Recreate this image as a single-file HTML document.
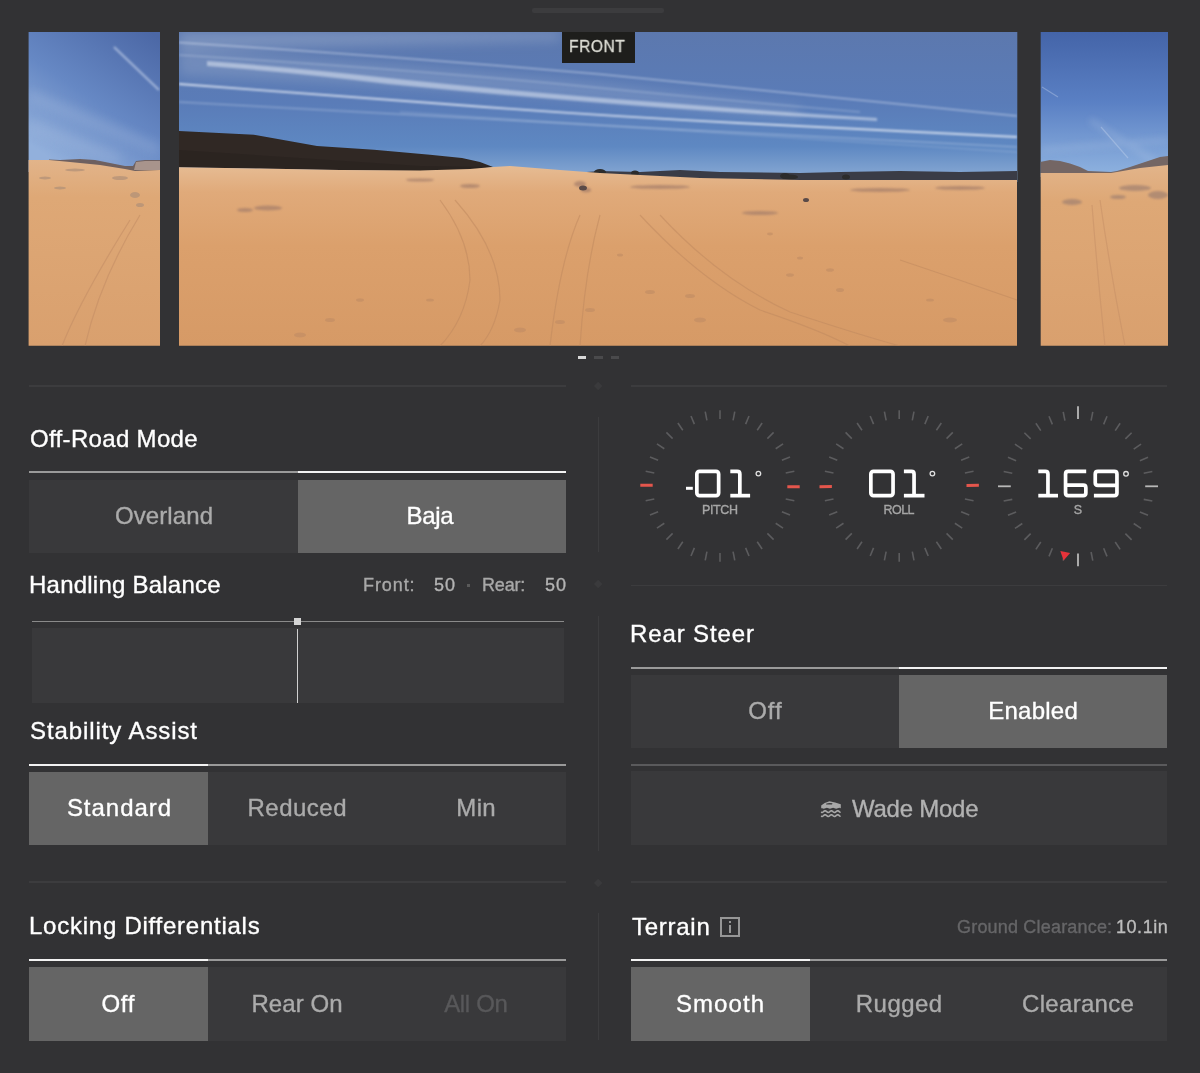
<!DOCTYPE html>
<html><head><meta charset="utf-8"><style>
html,body{margin:0;padding:0;}
body{width:1200px;height:1073px;background:#323234;position:relative;overflow:hidden;font-family:"Liberation Sans",sans-serif;}
.t{position:absolute;white-space:nowrap;-webkit-text-stroke:0.35px currentColor;will-change:transform;}
.r{position:absolute;box-sizing:border-box;}
svg{position:absolute;}
</style></head><body>
<div class="r" style="left:531.5px;top:8px;width:132px;height:4.5px;background:#3c3c3e;border-radius:2px;"></div>
<svg style="left:0;top:0" width="1200" height="1073" viewBox="0 0 1200 1073"><defs>
<linearGradient id="skyC" x1="0" y1="32" x2="0" y2="175" gradientUnits="userSpaceOnUse">
 <stop offset="0" stop-color="#5c78ae"/>
 <stop offset="0.5" stop-color="#5a7cb8"/>
 <stop offset="0.8" stop-color="#5e88c2"/>
 <stop offset="1" stop-color="#84a6d2"/>
</linearGradient>
<linearGradient id="sandC" x1="0" y1="165" x2="0" y2="346" gradientUnits="userSpaceOnUse">
 <stop offset="0" stop-color="#e6bc94"/>
 <stop offset="0.15" stop-color="#e0aa7a"/>
 <stop offset="0.45" stop-color="#dba06c"/>
 <stop offset="1" stop-color="#d69a66"/>
</linearGradient>
<linearGradient id="skyL" x1="150" y1="32" x2="60" y2="165" gradientUnits="userSpaceOnUse">
 <stop offset="0" stop-color="#4c68a6"/>
 <stop offset="0.55" stop-color="#6688c4"/>
 <stop offset="1" stop-color="#92b0dc"/>
</linearGradient>
<linearGradient id="sandL" x1="0" y1="160" x2="0" y2="346" gradientUnits="userSpaceOnUse">
 <stop offset="0" stop-color="#e2b48a"/>
 <stop offset="0.2" stop-color="#dea876"/>
 <stop offset="1" stop-color="#d9a06e"/>
</linearGradient>
<linearGradient id="skyR" x1="0" y1="32" x2="0" y2="172" gradientUnits="userSpaceOnUse">
 <stop offset="0" stop-color="#4464a8"/>
 <stop offset="0.5" stop-color="#5a80c4"/>
 <stop offset="1" stop-color="#8cb0de"/>
</linearGradient>
<linearGradient id="sandR" x1="0" y1="165" x2="0" y2="346" gradientUnits="userSpaceOnUse">
 <stop offset="0" stop-color="#e2b48a"/>
 <stop offset="0.2" stop-color="#dea876"/>
 <stop offset="1" stop-color="#d9a06e"/>
</linearGradient>
<filter id="b06" x="-20%" y="-100%" width="140%" height="300%"><feGaussianBlur stdDeviation="0.6"/></filter>
<filter id="b1" x="-20%" y="-100%" width="140%" height="300%"><feGaussianBlur stdDeviation="1.2"/></filter>
<filter id="b3" x="-20%" y="-100%" width="140%" height="300%"><feGaussianBlur stdDeviation="3.5"/></filter>
<filter id="b6" x="-20%" y="-100%" width="140%" height="300%"><feGaussianBlur stdDeviation="6"/></filter>
<clipPath id="cC"><rect x="179" y="32" width="838.3" height="313.7"/></clipPath>
<clipPath id="cL"><rect x="28.6" y="32" width="131.4" height="313.7"/></clipPath>
<clipPath id="cR"><rect x="1040.7" y="32" width="127.3" height="313.7"/></clipPath>
</defs><g clip-path="url(#cC)"><rect x="179" y="32" width="839" height="150" fill="url(#skyC)"/><g filter="url(#b6)" fill="#9aaccc" opacity="0.5"><path d="M179 32 H560 V40 Q400 44 179 50 Z"/><path d="M179 50 Q400 64 600 84 Q700 96 800 108 L800 118 Q700 110 600 100 Q400 84 179 76 Z" opacity="0.7"/></g><g filter="url(#b1)" fill="none" stroke="#e4eaf6"><path d="M179 42.5 Q390 56 598 74 Q800 94 1017 116" stroke-width="1" opacity="0.7"/><path d="M179 84 Q320 94 458 105 Q600 116 738 123 Q880 130 1017 137" stroke-width="1.8" opacity="0.85"/><path d="M179 102 Q600 126 1017 147" stroke-width="0.9" opacity="0.5"/><path d="M179 55 Q390 68 560 84 Q700 98 860 112" stroke-width="0.8" opacity="0.5"/><path d="M400 112 Q700 132 1017 152" stroke-width="0.7" opacity="0.4"/></g><g filter="url(#b1)" fill="#dfe6f3" opacity="0.55"><path d="M207 61 Q300 68 388 78 Q520 92 668 103 Q780 112 877 118 L877 121 Q780 116 668 108 Q520 97 388 84 Q300 73 207 66 Z"/></g><path d="M560 174 L600 171 L640 172 L680 170 L720 172 L800 173 L840 172 L900 171 L960 172 L1017 171 L1017 184 L560 182 Z" fill="#3a3c46"/><g fill="#2c2c2c"><ellipse cx="600" cy="172" rx="6" ry="3"/><ellipse cx="635" cy="173" rx="4" ry="2.5"/><ellipse cx="785" cy="176" rx="5" ry="3"/><ellipse cx="846" cy="177" rx="4" ry="2.5"/><ellipse cx="790" cy="177" rx="8" ry="2.5"/></g><path d="M179 131 L254 134.8 L317 146 L374 149.8 L430 154.8 L462 158 L480 162 L493 167 L470 170 L420 171 L340 170 L260 168.5 L179 167.3 Z" fill="#302824"/><path d="M179 150 L300 158 L420 166 L493 167 L420 171 L340 170 L179 167.3 Z" fill="#2a221f" opacity="0.7"/><path d="M179 167.3 L260 168.5 L340 170 L420 170.5 L470 169 L493 167 L510 166 L560 170 L600 173 L700 178 L800 180 L1017 180 L1017 346 L179 346 Z" fill="url(#sandC)"/><g filter="url(#b1)" fill="#a8806a" opacity="0.75"><ellipse cx="268" cy="208" rx="14" ry="2.5"/><ellipse cx="245" cy="210" rx="8" ry="2"/><ellipse cx="580" cy="184" rx="6" ry="3"/><ellipse cx="586" cy="190" rx="5" ry="2.5"/><ellipse cx="660" cy="187" rx="30" ry="2"/><ellipse cx="760" cy="213" rx="18" ry="2"/><ellipse cx="880" cy="190" rx="30" ry="2"/><ellipse cx="960" cy="188" rx="25" ry="2"/><ellipse cx="470" cy="186" rx="10" ry="2"/><ellipse cx="420" cy="180" rx="14" ry="1.6"/></g><g fill="#5a4a48"><ellipse cx="806" cy="200" rx="3" ry="2"/><ellipse cx="583" cy="188" rx="4" ry="2.5"/></g><g fill="none" stroke="#c08a60" stroke-width="1.2" opacity="0.55" filter="url(#b06)"><path d="M440 200 Q470 240 470 280 Q465 320 440 346"/><path d="M455 200 Q500 250 500 300 Q495 330 480 346"/><path d="M580 215 Q560 260 550 346"/><path d="M600 215 Q585 270 580 346"/><path d="M640 215 Q700 280 760 310 Q820 330 850 346"/><path d="M660 215 Q720 280 790 312 Q860 335 900 346"/><path d="M900 260 Q960 280 1017 300"/></g><g fill="#c08c64" opacity="0.6"><ellipse cx="520" cy="330" rx="6" ry="2.5"/><ellipse cx="560" cy="322" rx="5" ry="2"/><ellipse cx="590" cy="310" rx="5" ry="2"/><ellipse cx="650" cy="292" rx="5" ry="2"/><ellipse cx="690" cy="296" rx="5" ry="2"/><ellipse cx="700" cy="320" rx="6" ry="2.5"/><ellipse cx="790" cy="275" rx="4" ry="1.8"/><ellipse cx="830" cy="270" rx="4" ry="1.8"/><ellipse cx="800" cy="258" rx="3" ry="1.5"/><ellipse cx="840" cy="290" rx="4" ry="2"/><ellipse cx="950" cy="320" rx="7" ry="2.5"/><ellipse cx="930" cy="300" rx="4" ry="1.6"/><ellipse cx="300" cy="335" rx="6" ry="2.5"/><ellipse cx="330" cy="320" rx="5" ry="2"/><ellipse cx="360" cy="300" rx="4" ry="1.8"/><ellipse cx="430" cy="300" rx="4" ry="1.6"/><ellipse cx="620" cy="255" rx="3" ry="1.5"/><ellipse cx="770" cy="234" rx="3" ry="1.4"/></g></g><g clip-path="url(#cL)"><rect x="28" y="32" width="133" height="140" fill="url(#skyL)"/><g filter="url(#b6)" fill="none" stroke="#b4c6e4" opacity="0.35"><path d="M28 95 L160 150" stroke-width="8"/><path d="M28 125 L120 160" stroke-width="8"/></g><g filter="url(#b1)" stroke="#d0dcf0" fill="none" opacity="0.6"><path d="M114 47 L159 90" stroke-width="2.2"/></g><path d="M49 159.5 L60 160 L80 159 L95 160 L110 163 L125 166 L133 166 L136 161 L145 160 L160 160 L160 172 L49 172 Z" fill="#6e6060"/><path d="M136 162 L145 161 L160 161 L160 170 L134 170 Z" fill="#a8948c"/><path d="M28 160 L49 160 L70 162 L100 165 L125 169 L135 171 L160 170 L160 346 L28 346 Z" fill="url(#sandL)"/><g filter="url(#b06)" fill="#b09078" opacity="0.7"><ellipse cx="45" cy="178" rx="6" ry="1.5"/><ellipse cx="75" cy="170" rx="10" ry="1.5"/><ellipse cx="135" cy="195" rx="5" ry="3"/><ellipse cx="140" cy="205" rx="4" ry="2"/><ellipse cx="120" cy="178" rx="8" ry="2"/><ellipse cx="60" cy="188" rx="6" ry="1.5"/></g><g fill="none" stroke="#c48e66" stroke-width="1.2" opacity="0.6" filter="url(#b06)"><path d="M140 215 Q100 280 85 346"/><path d="M130 220 Q80 300 62 346"/></g></g><g clip-path="url(#cR)"><rect x="1040" y="32" width="128" height="145" fill="url(#skyR)"/><g filter="url(#b3)" fill="none" stroke="#b8cae6" opacity="0.3"><path d="M1090 120 L1168 170" stroke-width="5"/><path d="M1041 150 L1168 140" stroke-width="4"/></g><g filter="url(#b06)" stroke="#d0dcf0" fill="none" opacity="0.35"><path d="M1042 87 L1058 97" stroke-width="1.2"/><path d="M1101 127 L1128 158" stroke-width="1.2"/></g><path d="M1040 162 L1050 160 L1060 161 L1070 163.5 L1080 167 L1088 171 L1111 172 L1117 171 L1130 167 L1145 162 L1160 157 L1168 156 L1168 180 L1040 180 Z" fill="#746664"/><path d="M1040 173 L1090 173 L1111 173 L1117 172 L1140 168 L1168 165 L1168 346 L1040 346 Z" fill="url(#sandR)"/><g filter="url(#b1)" fill="#a08070" opacity="0.7"><ellipse cx="1072" cy="202" rx="10" ry="3"/><ellipse cx="1135" cy="188" rx="16" ry="3"/><ellipse cx="1158" cy="195" rx="10" ry="4"/><ellipse cx="1118" cy="197" rx="8" ry="2"/></g><g fill="none" stroke="#c48e66" stroke-width="1.2" opacity="0.5" filter="url(#b06)"><path d="M1100 200 Q1110 270 1125 346"/><path d="M1092 205 Q1098 280 1105 346"/></g></g></svg>
<div class="r" style="left:562px;top:32px;width:73px;height:31px;background:#1e1e1c;"></div>
<div class="t" style="left:569.3px;top:37.46px;font-size:17px;line-height:20px;color:#dcdcd4;letter-spacing:0.5px;transform:scaleX(0.92);transform-origin:left;">FRONT</div>
<div class="r" style="left:578px;top:356px;width:8px;height:3px;background:#d8d8d8;"></div>
<div class="r" style="left:594px;top:356px;width:8.5px;height:3px;background:#4a4a4c;"></div>
<div class="r" style="left:610.5px;top:356px;width:8.5px;height:3px;background:#4a4a4c;"></div>
<div class="r" style="left:29px;top:385px;width:537px;height:2px;background:#3c3c3e;"></div>
<div class="r" style="left:631px;top:385px;width:536px;height:2px;background:#3c3c3e;"></div>
<div class="r" style="left:631px;top:584.5px;width:536px;height:1.6px;background:#3c3c3e;"></div>
<div class="r" style="left:29px;top:881px;width:537px;height:1.8px;background:#3c3c3e;"></div>
<div class="r" style="left:631px;top:881px;width:536px;height:1.8px;background:#3c3c3e;"></div>
<div class="r" style="left:595.3px;top:382.8px;width:6.4px;height:6.4px;background:#3a3a3c;transform:rotate(45deg);"></div>
<div class="r" style="left:595.3px;top:581.3px;width:6.4px;height:6.4px;background:#3a3a3c;transform:rotate(45deg);"></div>
<div class="r" style="left:595.3px;top:879.5px;width:6.4px;height:6.4px;background:#3a3a3c;transform:rotate(45deg);"></div>
<div class="r" style="left:597.5px;top:416.5px;width:1.5px;height:135.5px;background:#3c3c3e;"></div>
<div class="r" style="left:597.5px;top:616px;width:1.5px;height:235px;background:#3c3c3e;"></div>
<div class="r" style="left:597.5px;top:912.5px;width:1.5px;height:127.5px;background:#3c3c3e;"></div>
<div class="t" style="left:29.6px;top:424.08px;font-size:24px;line-height:29px;color:#fff;letter-spacing:0.33px;">Off-Road Mode</div>
<div class="r" style="left:29px;top:471px;width:537px;height:2px;background:#9a9a9a;"></div>
<div class="r" style="left:297.5px;top:471px;width:268.5px;height:2px;background:#f2f2f2;"></div>
<div class="r" style="left:29px;top:479.5px;width:537px;height:73.25px;background:#39393b;"></div>
<div class="r" style="left:297.5px;top:479.5px;width:268.5px;height:73.25px;background:#656565;"></div>
<div class="t" style="left:-36.099999999999994px;width:400px;text-align:center;text-indent:0.11px;top:501.28px;font-size:24px;line-height:29px;color:#ababab;letter-spacing:0.11px;">Overland</div>
<div class="t" style="left:230.3px;width:400px;text-align:center;text-indent:-0.33px;top:501.08px;font-size:24px;line-height:29px;color:#ffffff;letter-spacing:-0.33px;">Baja</div>
<div class="t" style="left:29.2px;top:570.28px;font-size:24px;line-height:29px;color:#fff;letter-spacing:0.23px;">Handling Balance</div>
<div class="t" style="left:362.8px;top:574.26px;font-size:18px;line-height:22px;color:#a8a8a8;letter-spacing:0.92px;">Front:</div>
<div class="t" style="left:433.6px;top:574.26px;font-size:18px;line-height:22px;color:#b4b4b4;letter-spacing:1.1px;">50</div>
<div class="r" style="left:467px;top:584px;width:3px;height:3px;background:#5a5a5a;"></div>
<div class="t" style="left:482px;top:574.26px;font-size:18px;line-height:22px;color:#a8a8a8;letter-spacing:-0.17px;">Rear:</div>
<div class="t" style="left:544.8px;top:574.26px;font-size:18px;line-height:22px;color:#b4b4b4;letter-spacing:1.1px;">50</div>
<div class="r" style="left:32px;top:621px;width:531.5px;height:1.3px;background:#8a8a8a;"></div>
<div class="r" style="left:32.3px;top:628px;width:531.5px;height:74.5px;background:#39393b;"></div>
<div class="r" style="left:296.8px;top:628.5px;width:1.6px;height:74px;background:#d0d0d0;"></div>
<div class="r" style="left:294px;top:618.3px;width:7px;height:7px;background:#d4d4d4;"></div>
<div class="t" style="left:29.6px;top:716.48px;font-size:24px;line-height:29px;color:#fff;letter-spacing:0.91px;">Stability Assist</div>
<div class="r" style="left:29px;top:764px;width:537px;height:2px;background:#9a9a9a;"></div>
<div class="r" style="left:29.0px;top:764px;width:179.0px;height:2px;background:#f2f2f2;"></div>
<div class="r" style="left:29px;top:772px;width:537px;height:73.20000000000005px;background:#39393b;"></div>
<div class="r" style="left:29.0px;top:772px;width:179.0px;height:73.20000000000005px;background:#656565;"></div>
<div class="t" style="left:-81.5px;width:400px;text-align:center;text-indent:0.97px;top:793.28px;font-size:24px;line-height:29px;color:#ffffff;letter-spacing:0.97px;">Standard</div>
<div class="t" style="left:97.0px;width:400px;text-align:center;text-indent:0.5px;top:793.28px;font-size:24px;line-height:29px;color:#ababab;letter-spacing:0.5px;">Reduced</div>
<div class="t" style="left:276.15px;width:400px;text-align:center;text-indent:0.35px;top:793.28px;font-size:24px;line-height:29px;color:#ababab;letter-spacing:0.35px;">Min</div>
<div class="t" style="left:28.8px;top:911.48px;font-size:24px;line-height:29px;color:#fff;letter-spacing:0.75px;">Locking Differentials</div>
<div class="r" style="left:29px;top:959.3px;width:537px;height:2px;background:#9a9a9a;"></div>
<div class="r" style="left:29.0px;top:959.3px;width:179.0px;height:2px;background:#f2f2f2;"></div>
<div class="r" style="left:29px;top:967px;width:537px;height:73.59999999999991px;background:#39393b;"></div>
<div class="r" style="left:29.0px;top:967px;width:179.0px;height:73.59999999999991px;background:#656565;"></div>
<div class="t" style="left:-81.75px;width:400px;text-align:center;text-indent:0.75px;top:988.78px;font-size:24px;line-height:29px;color:#ffffff;letter-spacing:0.75px;">Off</div>
<div class="t" style="left:96.69999999999999px;width:400px;text-align:center;text-indent:0.07px;top:988.78px;font-size:24px;line-height:29px;color:#ababab;letter-spacing:0.07px;">Rear On</div>
<div class="t" style="left:276.0px;width:400px;text-align:center;text-indent:-0.35px;top:988.78px;font-size:24px;line-height:29px;color:#58585a;letter-spacing:-0.35px;">All On</div>
<svg style="left:0;top:0" width="1200" height="1073" viewBox="0 0 1200 1073"><line x1="720.00" y1="419.00" x2="720.00" y2="410.20" stroke="#5c5c5e" stroke-width="1.6"/><line x1="733.07" y1="420.29" x2="734.79" y2="411.66" stroke="#5c5c5e" stroke-width="1.6"/><line x1="745.64" y1="424.10" x2="749.01" y2="415.97" stroke="#5c5c5e" stroke-width="1.6"/><line x1="757.22" y1="430.29" x2="762.11" y2="422.97" stroke="#5c5c5e" stroke-width="1.6"/><line x1="767.38" y1="438.62" x2="773.60" y2="432.40" stroke="#5c5c5e" stroke-width="1.6"/><line x1="775.71" y1="448.78" x2="783.03" y2="443.89" stroke="#5c5c5e" stroke-width="1.6"/><line x1="781.90" y1="460.36" x2="790.03" y2="456.99" stroke="#5c5c5e" stroke-width="1.6"/><line x1="785.71" y1="472.93" x2="794.34" y2="471.21" stroke="#5c5c5e" stroke-width="1.6"/><line x1="787.30" y1="486.70" x2="799.70" y2="486.83" stroke="#e4564c" stroke-width="3"/><line x1="785.71" y1="499.07" x2="794.34" y2="500.79" stroke="#5c5c5e" stroke-width="1.6"/><line x1="781.90" y1="511.64" x2="790.03" y2="515.01" stroke="#5c5c5e" stroke-width="1.6"/><line x1="775.71" y1="523.22" x2="783.03" y2="528.11" stroke="#5c5c5e" stroke-width="1.6"/><line x1="767.38" y1="533.38" x2="773.60" y2="539.60" stroke="#5c5c5e" stroke-width="1.6"/><line x1="757.22" y1="541.71" x2="762.11" y2="549.03" stroke="#5c5c5e" stroke-width="1.6"/><line x1="745.64" y1="547.90" x2="749.01" y2="556.03" stroke="#5c5c5e" stroke-width="1.6"/><line x1="733.07" y1="551.71" x2="734.79" y2="560.34" stroke="#5c5c5e" stroke-width="1.6"/><line x1="720.00" y1="553.00" x2="720.00" y2="561.80" stroke="#5c5c5e" stroke-width="1.6"/><line x1="706.93" y1="551.71" x2="705.21" y2="560.34" stroke="#5c5c5e" stroke-width="1.6"/><line x1="694.36" y1="547.90" x2="690.99" y2="556.03" stroke="#5c5c5e" stroke-width="1.6"/><line x1="682.78" y1="541.71" x2="677.89" y2="549.03" stroke="#5c5c5e" stroke-width="1.6"/><line x1="672.62" y1="533.38" x2="666.40" y2="539.60" stroke="#5c5c5e" stroke-width="1.6"/><line x1="664.29" y1="523.22" x2="656.97" y2="528.11" stroke="#5c5c5e" stroke-width="1.6"/><line x1="658.10" y1="511.64" x2="649.97" y2="515.01" stroke="#5c5c5e" stroke-width="1.6"/><line x1="654.29" y1="499.07" x2="645.66" y2="500.79" stroke="#5c5c5e" stroke-width="1.6"/><line x1="652.70" y1="485.30" x2="640.30" y2="485.17" stroke="#e4564c" stroke-width="3"/><line x1="654.29" y1="472.93" x2="645.66" y2="471.21" stroke="#5c5c5e" stroke-width="1.6"/><line x1="658.10" y1="460.36" x2="649.97" y2="456.99" stroke="#5c5c5e" stroke-width="1.6"/><line x1="664.29" y1="448.78" x2="656.97" y2="443.89" stroke="#5c5c5e" stroke-width="1.6"/><line x1="672.62" y1="438.62" x2="666.40" y2="432.40" stroke="#5c5c5e" stroke-width="1.6"/><line x1="682.78" y1="430.29" x2="677.89" y2="422.97" stroke="#5c5c5e" stroke-width="1.6"/><line x1="694.36" y1="424.10" x2="690.99" y2="415.97" stroke="#5c5c5e" stroke-width="1.6"/><line x1="706.93" y1="420.29" x2="705.21" y2="411.66" stroke="#5c5c5e" stroke-width="1.6"/><line x1="899.20" y1="419.00" x2="899.20" y2="410.20" stroke="#5c5c5e" stroke-width="1.6"/><line x1="912.27" y1="420.29" x2="913.99" y2="411.66" stroke="#5c5c5e" stroke-width="1.6"/><line x1="924.84" y1="424.10" x2="928.21" y2="415.97" stroke="#5c5c5e" stroke-width="1.6"/><line x1="936.42" y1="430.29" x2="941.31" y2="422.97" stroke="#5c5c5e" stroke-width="1.6"/><line x1="946.58" y1="438.62" x2="952.80" y2="432.40" stroke="#5c5c5e" stroke-width="1.6"/><line x1="954.91" y1="448.78" x2="962.23" y2="443.89" stroke="#5c5c5e" stroke-width="1.6"/><line x1="961.10" y1="460.36" x2="969.23" y2="456.99" stroke="#5c5c5e" stroke-width="1.6"/><line x1="964.91" y1="472.93" x2="973.54" y2="471.21" stroke="#5c5c5e" stroke-width="1.6"/><line x1="966.50" y1="485.41" x2="978.90" y2="485.30" stroke="#e4564c" stroke-width="3"/><line x1="964.91" y1="499.07" x2="973.54" y2="500.79" stroke="#5c5c5e" stroke-width="1.6"/><line x1="961.10" y1="511.64" x2="969.23" y2="515.01" stroke="#5c5c5e" stroke-width="1.6"/><line x1="954.91" y1="523.22" x2="962.23" y2="528.11" stroke="#5c5c5e" stroke-width="1.6"/><line x1="946.58" y1="533.38" x2="952.80" y2="539.60" stroke="#5c5c5e" stroke-width="1.6"/><line x1="936.42" y1="541.71" x2="941.31" y2="549.03" stroke="#5c5c5e" stroke-width="1.6"/><line x1="924.84" y1="547.90" x2="928.21" y2="556.03" stroke="#5c5c5e" stroke-width="1.6"/><line x1="912.27" y1="551.71" x2="913.99" y2="560.34" stroke="#5c5c5e" stroke-width="1.6"/><line x1="899.20" y1="553.00" x2="899.20" y2="561.80" stroke="#5c5c5e" stroke-width="1.6"/><line x1="886.13" y1="551.71" x2="884.41" y2="560.34" stroke="#5c5c5e" stroke-width="1.6"/><line x1="873.56" y1="547.90" x2="870.19" y2="556.03" stroke="#5c5c5e" stroke-width="1.6"/><line x1="861.98" y1="541.71" x2="857.09" y2="549.03" stroke="#5c5c5e" stroke-width="1.6"/><line x1="851.82" y1="533.38" x2="845.60" y2="539.60" stroke="#5c5c5e" stroke-width="1.6"/><line x1="843.49" y1="523.22" x2="836.17" y2="528.11" stroke="#5c5c5e" stroke-width="1.6"/><line x1="837.30" y1="511.64" x2="829.17" y2="515.01" stroke="#5c5c5e" stroke-width="1.6"/><line x1="833.49" y1="499.07" x2="824.86" y2="500.79" stroke="#5c5c5e" stroke-width="1.6"/><line x1="831.90" y1="486.59" x2="819.50" y2="486.70" stroke="#e4564c" stroke-width="3"/><line x1="833.49" y1="472.93" x2="824.86" y2="471.21" stroke="#5c5c5e" stroke-width="1.6"/><line x1="837.30" y1="460.36" x2="829.17" y2="456.99" stroke="#5c5c5e" stroke-width="1.6"/><line x1="843.49" y1="448.78" x2="836.17" y2="443.89" stroke="#5c5c5e" stroke-width="1.6"/><line x1="851.82" y1="438.62" x2="845.60" y2="432.40" stroke="#5c5c5e" stroke-width="1.6"/><line x1="861.98" y1="430.29" x2="857.09" y2="422.97" stroke="#5c5c5e" stroke-width="1.6"/><line x1="873.56" y1="424.10" x2="870.19" y2="415.97" stroke="#5c5c5e" stroke-width="1.6"/><line x1="886.13" y1="420.29" x2="884.41" y2="411.66" stroke="#5c5c5e" stroke-width="1.6"/><line x1="1078.00" y1="419.10" x2="1078.00" y2="406.30" stroke="#b8b8b8" stroke-width="1.8"/><line x1="1091.07" y1="420.59" x2="1092.79" y2="411.96" stroke="#5c5c5e" stroke-width="1.6"/><line x1="1103.64" y1="424.40" x2="1107.01" y2="416.27" stroke="#5c5c5e" stroke-width="1.6"/><line x1="1115.22" y1="430.59" x2="1120.11" y2="423.27" stroke="#5c5c5e" stroke-width="1.6"/><line x1="1125.38" y1="438.92" x2="1131.60" y2="432.70" stroke="#5c5c5e" stroke-width="1.6"/><line x1="1133.71" y1="449.08" x2="1141.03" y2="444.19" stroke="#5c5c5e" stroke-width="1.6"/><line x1="1139.90" y1="460.66" x2="1148.03" y2="457.29" stroke="#5c5c5e" stroke-width="1.6"/><line x1="1143.71" y1="473.23" x2="1152.34" y2="471.51" stroke="#5c5c5e" stroke-width="1.6"/><line x1="1145.20" y1="486.30" x2="1158.00" y2="486.30" stroke="#b8b8b8" stroke-width="1.8"/><line x1="1143.71" y1="499.37" x2="1152.34" y2="501.09" stroke="#5c5c5e" stroke-width="1.6"/><line x1="1139.90" y1="511.94" x2="1148.03" y2="515.31" stroke="#5c5c5e" stroke-width="1.6"/><line x1="1133.71" y1="523.52" x2="1141.03" y2="528.41" stroke="#5c5c5e" stroke-width="1.6"/><line x1="1125.38" y1="533.68" x2="1131.60" y2="539.90" stroke="#5c5c5e" stroke-width="1.6"/><line x1="1115.22" y1="542.01" x2="1120.11" y2="549.33" stroke="#5c5c5e" stroke-width="1.6"/><line x1="1103.64" y1="548.20" x2="1107.01" y2="556.33" stroke="#5c5c5e" stroke-width="1.6"/><line x1="1091.07" y1="552.01" x2="1092.79" y2="560.64" stroke="#5c5c5e" stroke-width="1.6"/><line x1="1078.00" y1="553.50" x2="1078.00" y2="566.30" stroke="#b8b8b8" stroke-width="1.8"/><line x1="1064.93" y1="552.01" x2="1063.21" y2="560.64" stroke="#5c5c5e" stroke-width="1.6"/><line x1="1052.36" y1="548.20" x2="1048.99" y2="556.33" stroke="#5c5c5e" stroke-width="1.6"/><line x1="1040.78" y1="542.01" x2="1035.89" y2="549.33" stroke="#5c5c5e" stroke-width="1.6"/><line x1="1030.62" y1="533.68" x2="1024.40" y2="539.90" stroke="#5c5c5e" stroke-width="1.6"/><line x1="1022.29" y1="523.52" x2="1014.97" y2="528.41" stroke="#5c5c5e" stroke-width="1.6"/><line x1="1016.10" y1="511.94" x2="1007.97" y2="515.31" stroke="#5c5c5e" stroke-width="1.6"/><line x1="1012.29" y1="499.37" x2="1003.66" y2="501.09" stroke="#5c5c5e" stroke-width="1.6"/><line x1="1010.80" y1="486.30" x2="998.00" y2="486.30" stroke="#b8b8b8" stroke-width="1.8"/><line x1="1012.29" y1="473.23" x2="1003.66" y2="471.51" stroke="#5c5c5e" stroke-width="1.6"/><line x1="1016.10" y1="460.66" x2="1007.97" y2="457.29" stroke="#5c5c5e" stroke-width="1.6"/><line x1="1022.29" y1="449.08" x2="1014.97" y2="444.19" stroke="#5c5c5e" stroke-width="1.6"/><line x1="1030.62" y1="438.92" x2="1024.40" y2="432.70" stroke="#5c5c5e" stroke-width="1.6"/><line x1="1040.78" y1="430.59" x2="1035.89" y2="423.27" stroke="#5c5c5e" stroke-width="1.6"/><line x1="1052.36" y1="424.40" x2="1048.99" y2="416.27" stroke="#5c5c5e" stroke-width="1.6"/><line x1="1064.93" y1="420.59" x2="1063.21" y2="411.96" stroke="#5c5c5e" stroke-width="1.6"/><g transform="translate(1064.45,556.00) rotate(11)"><path d="M-5 -4 L5 -4 L0 4.5 Z" fill="#e8333a"/></g><rect x="686" y="486.8" width="6.8" height="3" fill="#fff"/><rect x="696.85" y="471.35" width="21.8" height="24.3" rx="2.6" ry="2.6" fill="none" stroke="#fff" stroke-width="3.7"/><path d="M730.3 471.35 H737.2499999999999 Q739.8499999999999 471.35 739.8499999999999 473.95000000000005 V495.65" fill="none" stroke="#fff" stroke-width="3.7"/><path d="M730.3 495.65 H750.1" fill="none" stroke="#fff" stroke-width="3.7"/><circle cx="758.4" cy="473.6" r="2.3" fill="none" stroke="#e0e0e0" stroke-width="1.3"/><rect x="870.85" y="471.35" width="22.199999999999978" height="24.3" rx="2.6" ry="2.6" fill="none" stroke="#fff" stroke-width="3.7"/><path d="M903.9 471.35 H911.4499999999999 Q914.05 471.35 914.05 473.95000000000005 V495.65" fill="none" stroke="#fff" stroke-width="3.7"/><path d="M903.9 495.65 H924.5" fill="none" stroke="#fff" stroke-width="3.7"/><circle cx="932.4" cy="473.6" r="2.3" fill="none" stroke="#e0e0e0" stroke-width="1.3"/><path d="M1038.3 471.35 H1045.3500000000001 Q1047.95 471.35 1047.95 473.95000000000005 V495.65" fill="none" stroke="#fff" stroke-width="3.7"/><path d="M1038.3 495.65 H1058" fill="none" stroke="#fff" stroke-width="3.7"/><path d="M1086.2 471.35 H1068.1499999999999 Q1065.55 471.35 1065.55 473.95000000000005 V493.04999999999995 Q1065.55 495.65 1068.1499999999999 495.65 H1083.2500000000002 Q1085.8500000000001 495.65 1085.8500000000001 493.04999999999995 V487.8 Q1085.8500000000001 485.2 1083.2500000000002 485.2 H1065.55" fill="none" stroke="#fff" stroke-width="3.7" stroke-linejoin="round"/><path d="M1093.9 495.65 H1114.3500000000001 Q1116.95 495.65 1116.95 493.04999999999995 V473.95000000000005 Q1116.95 471.35 1114.3500000000001 471.35 H1097.85 Q1095.25 471.35 1095.25 473.95000000000005 V482.79999999999995 Q1095.25 485.4 1097.85 485.4 H1116.95" fill="none" stroke="#fff" stroke-width="3.7" stroke-linejoin="round"/><circle cx="1126" cy="473.8" r="2.3" fill="none" stroke="#e0e0e0" stroke-width="1.3"/></svg>
<div class="t" style="left:519.85px;width:400px;text-align:center;text-indent:-0.375px;top:503.27px;font-size:12.5px;line-height:15px;color:#a6a6a6;letter-spacing:-0.375px;">PITCH</div>
<div class="t" style="left:699.1px;width:400px;text-align:center;text-indent:-0.53px;top:503.27px;font-size:12.5px;line-height:15px;color:#a6a6a6;letter-spacing:-0.53px;">ROLL</div>
<div class="t" style="left:878.0px;width:400px;text-align:center;text-indent:0px;top:503.27px;font-size:12.5px;line-height:15px;color:#a6a6a6;letter-spacing:0px;">S</div>
<div class="t" style="left:630px;top:619.03px;font-size:24px;line-height:29px;color:#fff;letter-spacing:0.87px;">Rear Steer</div>
<div class="r" style="left:631px;top:666.5px;width:536px;height:2px;background:#9a9a9a;"></div>
<div class="r" style="left:899.0px;top:666.5px;width:268.0px;height:2px;background:#f2f2f2;"></div>
<div class="r" style="left:631px;top:674.5px;width:536px;height:73.5px;background:#39393b;"></div>
<div class="r" style="left:899.0px;top:674.5px;width:268.0px;height:73.5px;background:#656565;"></div>
<div class="t" style="left:565.0px;width:400px;text-align:center;text-indent:1.0px;top:696.08px;font-size:24px;line-height:29px;color:#ababab;letter-spacing:1.0px;">Off</div>
<div class="t" style="left:833.0px;width:400px;text-align:center;text-indent:0.25px;top:696.08px;font-size:24px;line-height:29px;color:#ffffff;letter-spacing:0.25px;">Enabled</div>
<div class="r" style="left:631px;top:764.3px;width:536px;height:1.5px;background:#5a5a5c;"></div>
<div class="r" style="left:631px;top:770.8px;width:536px;height:74.2px;background:#39393b;"></div>
<div class="t" style="left:852px;top:793.58px;font-size:24px;line-height:29px;color:#b2b2b2;letter-spacing:-0.25px;">Wade Mode</div>
<svg style="left:0;top:0" width="1200" height="1073" viewBox="0 0 1200 1073"><path d="M821.2 808.3 L821.2 805.5 Q824 802.5 829.5 801.2 Q835 802 840.8 804.2 L840.8 808.3 Q839.3 807.4 837.8 808.3 Q836.2 809.2 834.6 808.3 Q833.1 807.4 831.5 808.3 Q830 809.2 828.4 808.3 Q826.8 807.4 825.3 808.3 Q823.7 809.2 822.2 808.3 Z" fill="#a8a8a8"/><path d="M826 803.8 Q829 802.3 832.5 803.3 L832 804.4 L826.2 804.4 Z" fill="#39393b"/><polyline points="821.60,812.40 822.00,812.45 822.40,812.37 822.80,812.16 823.20,811.87 823.60,811.54 824.00,811.21 824.40,810.95 824.80,810.79 825.20,810.75 825.60,810.85 826.00,811.07 826.40,811.37 826.80,811.71 827.20,812.02 827.60,812.28 828.00,812.42 828.40,812.44 828.80,812.33 829.20,812.10 829.60,811.79 830.00,811.45 830.40,811.14 830.80,810.90 831.20,810.77 831.60,810.77 832.00,810.90 832.40,811.14 832.80,811.45 833.20,811.79 833.60,812.10 834.00,812.33 834.40,812.44 834.80,812.42 835.20,812.28 835.60,812.03 836.00,811.71 836.40,811.37 836.80,811.07 837.20,810.85 837.60,810.75 838.00,810.79 838.40,810.95 838.80,811.21 839.20,811.54 839.60,811.87 840.00,812.16" fill="none" stroke="#a8a8a8" stroke-width="1.6" stroke-linecap="round" stroke-linejoin="round"/><polyline points="821.60,816.40 822.00,816.45 822.40,816.37 822.80,816.16 823.20,815.87 823.60,815.54 824.00,815.21 824.40,814.95 824.80,814.79 825.20,814.75 825.60,814.85 826.00,815.07 826.40,815.37 826.80,815.71 827.20,816.02 827.60,816.28 828.00,816.42 828.40,816.44 828.80,816.33 829.20,816.10 829.60,815.79 830.00,815.45 830.40,815.14 830.80,814.90 831.20,814.77 831.60,814.77 832.00,814.90 832.40,815.14 832.80,815.45 833.20,815.79 833.60,816.10 834.00,816.33 834.40,816.44 834.80,816.42 835.20,816.28 835.60,816.03 836.00,815.71 836.40,815.37 836.80,815.07 837.20,814.85 837.60,814.75 838.00,814.79 838.40,814.95 838.80,815.21 839.20,815.54 839.60,815.87 840.00,816.16" fill="none" stroke="#a8a8a8" stroke-width="1.6" stroke-linecap="round" stroke-linejoin="round"/></svg>
<div class="t" style="left:632px;top:911.78px;font-size:24px;line-height:29px;color:#fff;letter-spacing:0.73px;">Terrain</div>
<div class="r" style="left:720px;top:916.7px;width:20.2px;height:20px;border:2px solid #969696;"></div>
<div class="r" style="left:729px;top:924.6px;width:2.1px;height:8.2px;background:#969696;"></div>
<div class="r" style="left:729px;top:920.8px;width:2.1px;height:1.9px;background:#969696;"></div>
<div class="t" style="left:956.8px;top:916.26px;font-size:18px;line-height:22px;color:#666668;letter-spacing:0.19px;">Ground Clearance:</div>
<div class="t" style="left:1116px;top:916.26px;font-size:18px;line-height:22px;color:#bdbdbd;letter-spacing:0.54px;">10.1in</div>
<div class="r" style="left:631px;top:959.3px;width:536px;height:2px;background:#9a9a9a;"></div>
<div class="r" style="left:631.0px;top:959.3px;width:178.66666666666666px;height:2px;background:#f2f2f2;"></div>
<div class="r" style="left:631px;top:967px;width:536px;height:73.59999999999991px;background:#39393b;"></div>
<div class="r" style="left:631.0px;top:967px;width:178.66666666666666px;height:73.59999999999991px;background:#656565;"></div>
<div class="t" style="left:520.3px;width:400px;text-align:center;text-indent:1.1px;top:988.78px;font-size:24px;line-height:29px;color:#ffffff;letter-spacing:1.1px;">Smooth</div>
<div class="t" style="left:698.65px;width:400px;text-align:center;text-indent:0.46px;top:988.78px;font-size:24px;line-height:29px;color:#ababab;letter-spacing:0.46px;">Rugged</div>
<div class="t" style="left:878.0px;width:400px;text-align:center;text-indent:0.3px;top:988.78px;font-size:24px;line-height:29px;color:#ababab;letter-spacing:0.3px;">Clearance</div>
</body></html>
